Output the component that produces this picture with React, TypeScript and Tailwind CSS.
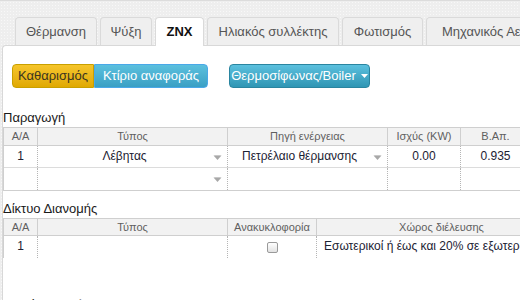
import React from 'react';

const tabs = [
  { label: 'Θέρμανση', w: 'w-[82px]' },
  { label: 'Ψύξη', w: 'w-[52px]' },
  { label: 'ZNX', w: 'w-[49px]', active: true },
  { label: 'Ηλιακός συλλέκτης', w: 'w-[132px]' },
  { label: 'Φωτισμός', w: 'w-[81px]' },
  { label: 'Μηχανικός Αερισμός', w: 'w-[150px]' },
];

const Arrow = () => (
  <svg width="9" height="6" viewBox="0 0 9 6" className="absolute right-[5px] top-[9px]">
    <path d="M0.5 0.5 L8.5 0.5 L4.5 5 Z" fill="#a8a8a8" />
    <path d="M1.5 0.5 L7.5 0.5" stroke="#c8c8c8" strokeWidth="1" />
  </svg>
);

const headCell = 'h-full border-r border-[#cfcfcf] text-center text-[11px] leading-[17px] text-[#5f5f5f]';
const bodyCell = 'relative h-full border-r border-dotted border-[#b5b5b5] text-center text-[12px] leading-[21px] text-[#1c2233]';

const App: React.FC = () => {
  return (
    <div
      className="w-[520px] h-[300px] overflow-hidden border-t border-[#dcdcdc] bg-[#eeeeee] bg-[radial-gradient(#f8f8f8_1px,transparent_1px)] bg-size-[3px_3px]"
      style={{ fontFamily: '"Liberation Sans", Arial, sans-serif' }}
    >
      {/* Tabs */}
      <div className="flex items-start gap-[3px] h-[44px] pt-4 pl-[15px] relative z-10">
        {tabs.map((t) => (
          <div
            key={t.label}
            className={`${t.w} shrink-0 rounded-t-[4px] border border-b-0 border-[#dadada] text-center text-[13px] whitespace-nowrap overflow-hidden ${
              t.active
                ? 'h-[29px] bg-white font-bold text-[#111] leading-[28px]'
                : 'h-[28px] bg-[#efefef] text-[#555] leading-[28px]'
            }`}
          >
            {t.label}
          </div>
        ))}
      </div>

      {/* Panel */}
      <div className="ml-[2px] h-full border-l border-t border-[#d8d8d8] rounded-tl-[4px] bg-white">
        <div className="flex items-center pt-[18px] pl-[9px]">
          <div className="flex">
            <button className="w-[82px] h-[24px] rounded-l-[4px] border border-[#c9a000] bg-gradient-to-b from-[#f6c52a] to-[#e0a900] text-[13px] text-[#3a3520]">
              Καθαρισμός
            </button>
            <button className="w-[114px] h-[24px] rounded-r-[4px] border border-[#4aa8e8] bg-gradient-to-b from-[#5bc0de] to-[#3aa0c4] text-[13px] text-white">
              Κτίριο αναφοράς
            </button>
          </div>
          <button className="ml-[21px] w-[141px] h-[24px] rounded-[4px] border border-[#2a85a0] bg-gradient-to-b from-[#5bc0de] to-[#2f96b4] text-[13px] text-white flex items-center justify-center gap-[5px]">
            <span>Θερμοσίφωνας/Boiler</span>
            <svg width="7" height="4" viewBox="0 0 7 4">
              <path d="M0 0 L7 0 L3.5 4 Z" fill="#ffffff" />
            </svg>
          </button>
        </div>

        {/* Παραγωγή */}
        <div className="mt-[20px] h-[19px] leading-[19px] text-[13px] text-[#1a1a1a]">Παραγωγή</div>
        <div className="border-l border-[#cfcfcf]">
          <div className="flex h-[19px] border-t border-b border-[#cfcfcf] bg-[#f2f2f2]">
            <div className={`${headCell} w-[34px] shrink-0`}>Α/Α</div>
            <div className={`${headCell} w-[190px] shrink-0`}>Τύπος</div>
            <div className={`${headCell} w-[160px] shrink-0`}>Πηγή ενέργειας</div>
            <div className={`${headCell} w-[73px] shrink-0`}>Ισχύς (KW)</div>
            <div className={`${headCell} w-[70px] shrink-0`}>Β.Απ.</div>
          </div>
          <div className="flex h-[22px] border-b border-[#dcdcdc]">
            <div className={`${bodyCell} w-[34px] shrink-0`}>1</div>
            <div className={`${bodyCell} w-[190px] shrink-0 pr-[16px]`}>
              Λέβητας
              <Arrow />
            </div>
            <div className={`${bodyCell} w-[160px] shrink-0 pr-[16px]`}>
              Πετρέλαιο θέρμανσης
              <Arrow />
            </div>
            <div className={`${bodyCell} w-[73px] shrink-0`}>0.00</div>
            <div className={`${bodyCell} w-[70px] shrink-0`}>0.935</div>
          </div>
          <div className="flex h-[23px] border-b border-[#cfcfcf]">
            <div className={`${bodyCell} w-[34px] shrink-0`}></div>
            <div className={`${bodyCell} w-[190px] shrink-0`}>
              <Arrow />
            </div>
            <div className={`${bodyCell} w-[160px] shrink-0`}></div>
            <div className={`${bodyCell} w-[73px] shrink-0`}></div>
            <div className={`${bodyCell} w-[70px] shrink-0`}></div>
          </div>
        </div>

        {/* Δίκτυο Διανομής */}
        <div className="mt-[8px] h-[19px] leading-[19px] text-[13px] text-[#1a1a1a]">Δίκτυο Διανομής</div>
        <div className="border-l border-[#cfcfcf]">
          <div className="flex h-[18px] border-t border-b border-[#cfcfcf] bg-[#f2f2f2]">
            <div className={`${headCell} w-[34px] shrink-0`}>Α/Α</div>
            <div className={`${headCell} w-[190px] shrink-0`}>Τύπος</div>
            <div className={`${headCell} w-[89px] shrink-0`}>Ανακυκλοφορία</div>
            <div className={`${headCell} w-[250px] shrink-0`}>Χώρος διέλευσης</div>
          </div>
          <div className="flex h-[22px]">
            <div className={`${bodyCell} w-[34px] shrink-0`}>1</div>
            <div className={`${bodyCell} w-[190px] shrink-0`}></div>
            <div className={`${bodyCell} w-[89px] shrink-0 flex items-center justify-center`}>
              <span className="block w-[11px] h-[11px] rounded-[2px] border border-[#9a9a9a] bg-gradient-to-b from-white to-[#e2e2e2]" />
            </div>
            <div className="w-[250px] shrink-0 h-full pl-[7px] text-[12px] leading-[21px] text-[#1c2233] whitespace-nowrap">
              Εσωτερικοί ή έως και 20% σε εξωτερικούς χώρους
            </div>
          </div>
        </div>

        <div className="mt-[37px] h-[19px] leading-[19px] text-[13px] text-[#1a1a1a]">Δοχεία αποθήκευσης</div>
      </div>
    </div>
  );
};

export default App;
